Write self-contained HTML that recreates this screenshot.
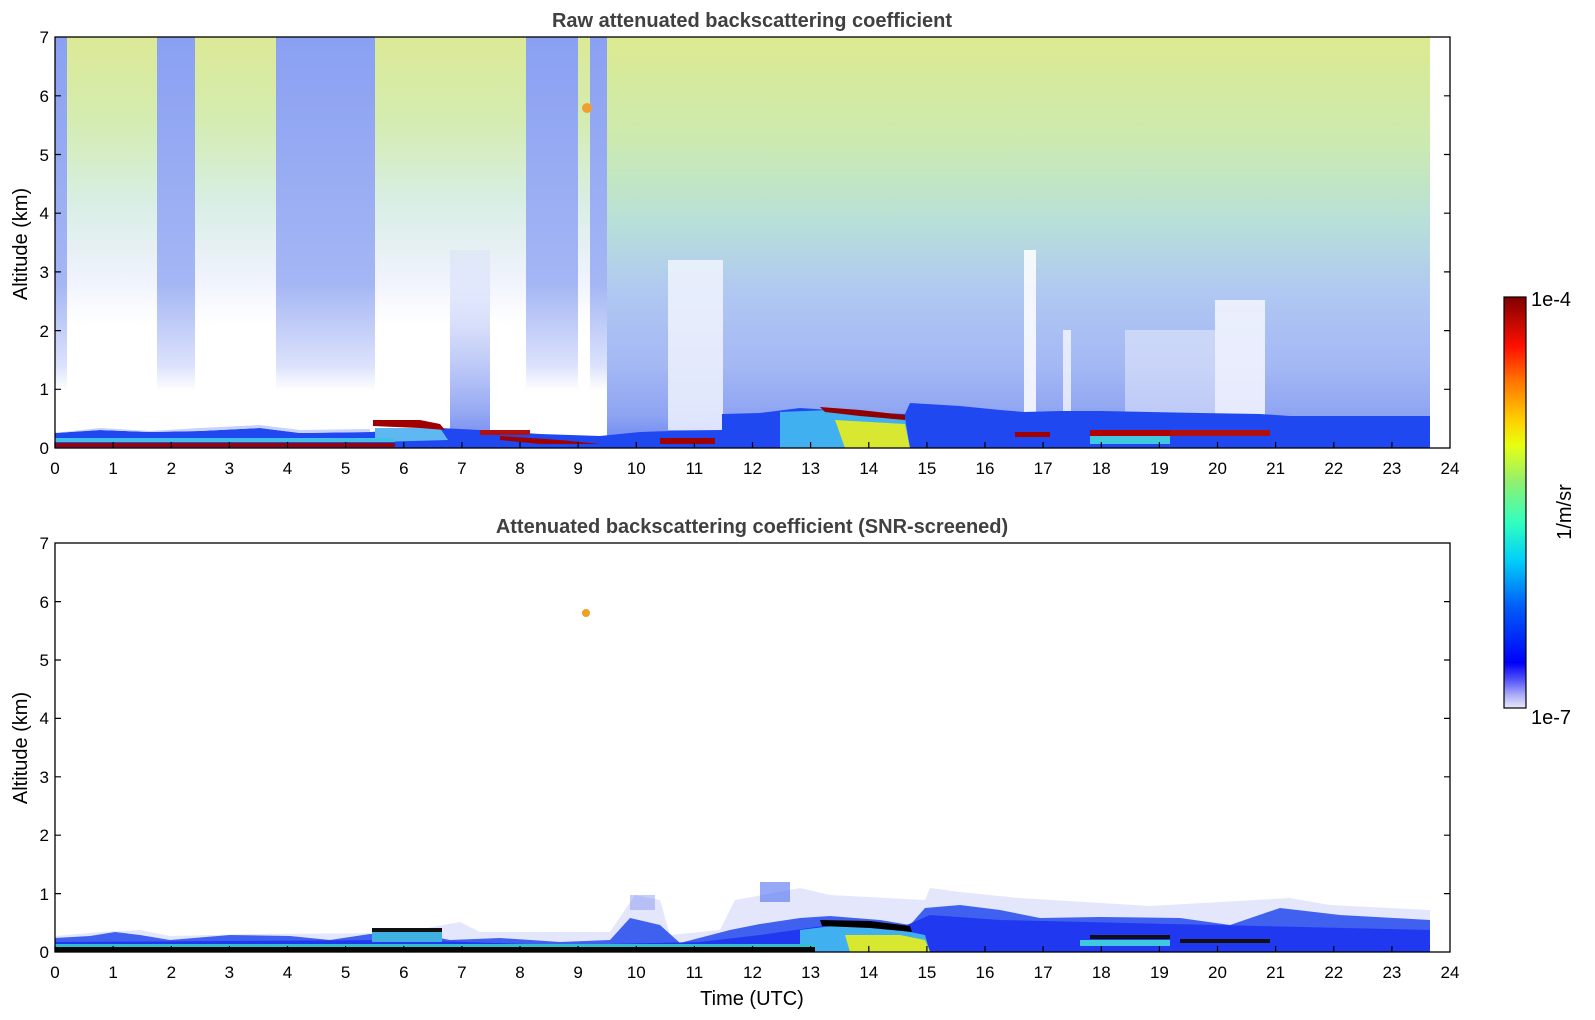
<!DOCTYPE html>
<html><head><meta charset="utf-8"><style>
html,body{margin:0;padding:0;background:#fff;}
svg{display:block;}
text{font-family:"Liberation Sans","DejaVu Sans",sans-serif;}
</style></head><body>
<svg width="1595" height="1020" viewBox="0 0 1595 1020" xmlns="http://www.w3.org/2000/svg">
<defs>
<linearGradient id="gGreen" x1="0" y1="37" x2="0" y2="448" gradientUnits="userSpaceOnUse">
<stop offset="0" stop-color="#dcea96"/><stop offset="0.2" stop-color="#d4ecb0"/><stop offset="0.4" stop-color="#d8eee4"/><stop offset="0.58" stop-color="#eef2fc"/><stop offset="0.7" stop-color="#ffffff"/><stop offset="1" stop-color="#ffffff"/>
</linearGradient>
<linearGradient id="gGB" x1="0" y1="37" x2="0" y2="448" gradientUnits="userSpaceOnUse">
<stop offset="0" stop-color="#dcea90"/><stop offset="0.25" stop-color="#cceab0"/><stop offset="0.45" stop-color="#b8e0d8"/><stop offset="0.62" stop-color="#b0c8f2"/><stop offset="0.8" stop-color="#a4b8f4"/><stop offset="0.92" stop-color="#8ea4f2"/><stop offset="1" stop-color="#6a84f0"/>
</linearGradient>
<linearGradient id="gBlue" x1="0" y1="37" x2="0" y2="448" gradientUnits="userSpaceOnUse">
<stop offset="0" stop-color="#8aa0f2"/><stop offset="0.6" stop-color="#a4b6f4"/><stop offset="0.8" stop-color="#dce2fc"/><stop offset="0.86" stop-color="#ffffff"/>
</linearGradient>
<linearGradient id="gLow" x1="0" y1="37" x2="0" y2="448" gradientUnits="userSpaceOnUse">
<stop offset="0" stop-color="#ffffff" stop-opacity="0"/><stop offset="0.6" stop-color="#c0ccf8" stop-opacity="0.3"/><stop offset="0.9" stop-color="#90a4f2" stop-opacity="0.9"/><stop offset="1" stop-color="#6a84f0"/>
</linearGradient>
<linearGradient id="gCbar" x1="0" y1="708" x2="0" y2="297" gradientUnits="userSpaceOnUse">
<stop offset="0" stop-color="#e8e8fa"/><stop offset="0.03" stop-color="#b0b0f8"/><stop offset="0.07" stop-color="#5050f8"/><stop offset="0.11" stop-color="#0000f8"/><stop offset="0.25" stop-color="#0060f8"/><stop offset="0.36" stop-color="#00d0f8"/><stop offset="0.45" stop-color="#30ffc0"/><stop offset="0.55" stop-color="#90f070"/><stop offset="0.64" stop-color="#e8ff10"/><stop offset="0.7" stop-color="#ffd000"/><stop offset="0.8" stop-color="#ff7000"/><stop offset="0.88" stop-color="#ff1000"/><stop offset="1" stop-color="#800000"/>
</linearGradient>
</defs>

<!-- ===== TOP PANEL ===== -->
<text x="752" y="27" text-anchor="middle" font-size="20" font-weight="bold" fill="#404040">Raw attenuated backscattering coefficient</text>
<rect x="55" y="37" width="1375" height="411" fill="url(#gGreen)"/>
<rect x="607" y="37" width="823" height="411" fill="url(#gGB)"/>
<rect x="55" y="37" width="12" height="360" fill="url(#gBlue)"/>
<rect x="157" y="37" width="38" height="411" fill="url(#gBlue)"/>
<rect x="276" y="37" width="99" height="411" fill="url(#gBlue)"/>
<rect x="526" y="37" width="52" height="411" fill="url(#gBlue)"/>
<rect x="590" y="37" width="17" height="411" fill="url(#gBlue)"/>
<rect x="450" y="250" width="40" height="198" fill="url(#gLow)"/>
<circle cx="587" cy="108" r="5" fill="#f0a030"/>
<rect x="668" y="260" width="55" height="170" fill="#f4f6fe" opacity="0.8"/>
<rect x="1024" y="250" width="12" height="180" fill="#ffffff" opacity="0.85"/>
<rect x="1215" y="300" width="50" height="128" fill="#f4f6fe" opacity="0.85"/>
<rect x="1063" y="330" width="8" height="95" fill="#ffffff" opacity="0.7"/>
<rect x="1125" y="330" width="90" height="95" fill="#eef0fc" opacity="0.5"/>
<!-- boundary layer -->
<polygon fill="#2048f0" points="55,433 100,430 150,432 200,431 260,428 300,433 370,432 440,428 480,430 540,434 600,436 640,432 670,431 722,430 722,414 760,413 800,408 830,410 880,413 905,414 910,403 960,406 1000,410 1024,412 1060,411 1100,411 1200,413 1260,414 1290,416 1430,416 1430,448 55,448"/>
<polygon fill="#c8d2fa" points="55,433 100,428 150,431 200,428 260,425 300,430 370,429 370,432 300,433 260,428 200,431 150,432 100,430 55,433"/>
<polygon fill="#5fb8f2" points="375,428 440,428 448,440 375,442"/>
<polygon fill="#a00000" points="373,420 420,420 440,424 445,430 420,428 373,426"/>
<rect x="55" y="443" width="340" height="4" fill="#a00000"/>
<rect x="55" y="438" width="340" height="4" fill="#40c0e8"/>
<rect x="480" y="430" width="50" height="5" fill="#b01010"/>
<polygon fill="#a00000" points="500,436 560,440 600,444 540,444 500,440"/>
<polygon fill="#40b0f0" points="780,412 830,410 880,414 905,418 910,448 780,448"/>
<polygon fill="#d8e830" points="835,420 870,422 905,424 910,448 845,448"/>
<polygon fill="#900000" points="820,407 860,410 905,415 905,420 860,416 825,412"/>
<rect x="1090" y="430" width="80" height="6" fill="#b00000"/>
<rect x="1170" y="430" width="100" height="6" fill="#b01010"/>
<rect x="1090" y="436" width="80" height="8" fill="#40c8e0"/>
<rect x="1015" y="432" width="35" height="5" fill="#a00000"/>
<rect x="660" y="438" width="55" height="6" fill="#a00000"/>
<rect x="55" y="37" width="1395" height="411" fill="none" stroke="#000" stroke-width="1.3"/>
<g stroke="#000" stroke-width="1.2">
<path d="M55,448v-6M113.1,448v-6M171.3,448v-6M229.4,448v-6M287.5,448v-6M345.6,448v-6M403.8,448v-6M461.9,448v-6M520,448v-6M578.1,448v-6M636.3,448v-6M694.4,448v-6M752.5,448v-6M810.6,448v-6M868.8,448v-6M926.9,448v-6M985,448v-6M1043.1,448v-6M1101.3,448v-6M1159.4,448v-6M1217.5,448v-6M1275.6,448v-6M1333.8,448v-6M1391.9,448v-6"/>
<path d="M55,389.3h6M55,330.6h6M55,271.9h6M55,213.2h6M55,154.5h6M55,95.8h6M1450,389.3h-6M1450,330.6h-6M1450,271.9h-6M1450,213.2h-6M1450,154.5h-6M1450,95.8h-6"/>
</g>
<g font-size="17" fill="#000" text-anchor="middle">
<text x="55" y="474">0</text><text x="113.1" y="474">1</text><text x="171.3" y="474">2</text><text x="229.4" y="474">3</text><text x="287.5" y="474">4</text><text x="345.6" y="474">5</text><text x="403.8" y="474">6</text><text x="461.9" y="474">7</text><text x="520" y="474">8</text><text x="578.1" y="474">9</text><text x="636.3" y="474">10</text><text x="694.4" y="474">11</text><text x="752.5" y="474">12</text><text x="810.6" y="474">13</text><text x="868.8" y="474">14</text><text x="926.9" y="474">15</text><text x="985" y="474">16</text><text x="1043.1" y="474">17</text><text x="1101.3" y="474">18</text><text x="1159.4" y="474">19</text><text x="1217.5" y="474">20</text><text x="1275.6" y="474">21</text><text x="1333.8" y="474">22</text><text x="1391.9" y="474">23</text><text x="1450" y="474">24</text>
</g>
<g font-size="17" fill="#000" text-anchor="end">
<text x="49" y="454">0</text><text x="49" y="395">1</text><text x="49" y="337">2</text><text x="49" y="278">3</text><text x="49" y="219">4</text><text x="49" y="161">5</text><text x="49" y="102">6</text><text x="49" y="43">7</text>
</g>
<text transform="translate(27,244) rotate(-90)" text-anchor="middle" font-size="20" fill="#000">Altitude (km)</text>

<!-- ===== BOTTOM PANEL ===== -->
<text x="752" y="533" text-anchor="middle" font-size="20" font-weight="bold" fill="#404040">Attenuated backscattering coefficient (SNR-screened)</text>
<circle cx="586" cy="613" r="4" fill="#f0a020"/>
<polygon fill="#e4e7fc" points="55,936 100,932 140,930 170,936 250,934 400,933 460,922 480,932 610,932 635,895 660,900 670,935 720,930 735,900 800,888 830,895 925,900 930,888 960,892 1020,898 1150,906 1290,898 1330,905 1430,910 1430,952 55,952"/>
<polygon fill="#4060f0" points="55,938 90,936 115,932 140,935 170,940 230,935 290,936 330,940 370,934 420,934 450,940 500,938 560,942 610,940 630,918 660,925 680,943 730,930 760,924 800,918 830,916 880,920 910,925 925,908 960,905 1000,910 1040,918 1100,917 1180,918 1230,925 1280,908 1340,915 1430,920 1430,952 55,952"/>
<polygon fill="#2038f0" points="55,942 400,940 560,945 700,942 760,935 830,925 900,928 930,915 1000,920 1430,930 1430,952 55,952"/>
<rect x="760" y="882" width="30" height="20" fill="#5070f0" opacity="0.6"/>
<rect x="630" y="895" width="25" height="15" fill="#7088f0" opacity="0.4"/>
<polygon fill="#40b0f0" points="800,930 840,925 900,930 925,935 930,952 800,952"/>
<polygon fill="#d8e830" points="845,935 900,935 925,940 930,952 850,952"/>
<polygon fill="#000" points="820,920 870,921 910,926 912,932 870,928 822,926"/>
<rect x="1080" y="940" width="90" height="6" fill="#40c8e0"/>
<rect x="1090" y="935" width="80" height="4" fill="#101010"/>
<rect x="1180" y="939" width="90" height="4" fill="#101010"/>
<rect x="55" y="947" width="760" height="5" fill="#080808"/>
<rect x="55" y="944" width="760" height="3" fill="#30c0d0"/>
<rect x="372" y="928" width="70" height="4" fill="#111"/>
<rect x="372" y="932" width="70" height="10" fill="#40b0e0"/>
<rect x="55" y="543" width="1395" height="409" fill="none" stroke="#000" stroke-width="1.3"/>
<g stroke="#000" stroke-width="1.2">
<path d="M55,952v-6M113.1,952v-6M171.3,952v-6M229.4,952v-6M287.5,952v-6M345.6,952v-6M403.8,952v-6M461.9,952v-6M520,952v-6M578.1,952v-6M636.3,952v-6M694.4,952v-6M752.5,952v-6M810.6,952v-6M868.8,952v-6M926.9,952v-6M985,952v-6M1043.1,952v-6M1101.3,952v-6M1159.4,952v-6M1217.5,952v-6M1275.6,952v-6M1333.8,952v-6M1391.9,952v-6"/>
<path d="M55,893.6h6M55,835.2h6M55,776.8h6M55,718.4h6M55,660h6M55,601.6h6M1450,893.6h-6M1450,835.2h-6M1450,776.8h-6M1450,718.4h-6M1450,660h-6M1450,601.6h-6"/>
</g>
<g font-size="17" fill="#000" text-anchor="middle">
<text x="55" y="978">0</text><text x="113.1" y="978">1</text><text x="171.3" y="978">2</text><text x="229.4" y="978">3</text><text x="287.5" y="978">4</text><text x="345.6" y="978">5</text><text x="403.8" y="978">6</text><text x="461.9" y="978">7</text><text x="520" y="978">8</text><text x="578.1" y="978">9</text><text x="636.3" y="978">10</text><text x="694.4" y="978">11</text><text x="752.5" y="978">12</text><text x="810.6" y="978">13</text><text x="868.8" y="978">14</text><text x="926.9" y="978">15</text><text x="985" y="978">16</text><text x="1043.1" y="978">17</text><text x="1101.3" y="978">18</text><text x="1159.4" y="978">19</text><text x="1217.5" y="978">20</text><text x="1275.6" y="978">21</text><text x="1333.8" y="978">22</text><text x="1391.9" y="978">23</text><text x="1450" y="978">24</text>
</g>
<g font-size="17" fill="#000" text-anchor="end">
<text x="49" y="958">0</text><text x="49" y="900">1</text><text x="49" y="841">2</text><text x="49" y="783">3</text><text x="49" y="724">4</text><text x="49" y="666">5</text><text x="49" y="608">6</text><text x="49" y="549">7</text>
</g>
<text transform="translate(27,748) rotate(-90)" text-anchor="middle" font-size="20" fill="#000">Altitude (km)</text>
<text x="752" y="1005" text-anchor="middle" font-size="20" fill="#000">Time (UTC)</text>

<rect x="1504" y="297" width="22" height="411" fill="url(#gCbar)" stroke="#000" stroke-width="1.2"/>
<text x="1531" y="306" font-size="20" fill="#000">1e-4</text>
<text x="1531" y="724" font-size="20" fill="#000">1e-7</text>
<text transform="translate(1571,512) rotate(-90)" text-anchor="middle" font-size="20" fill="#000">1/m/sr</text>
</svg>
</body></html>
